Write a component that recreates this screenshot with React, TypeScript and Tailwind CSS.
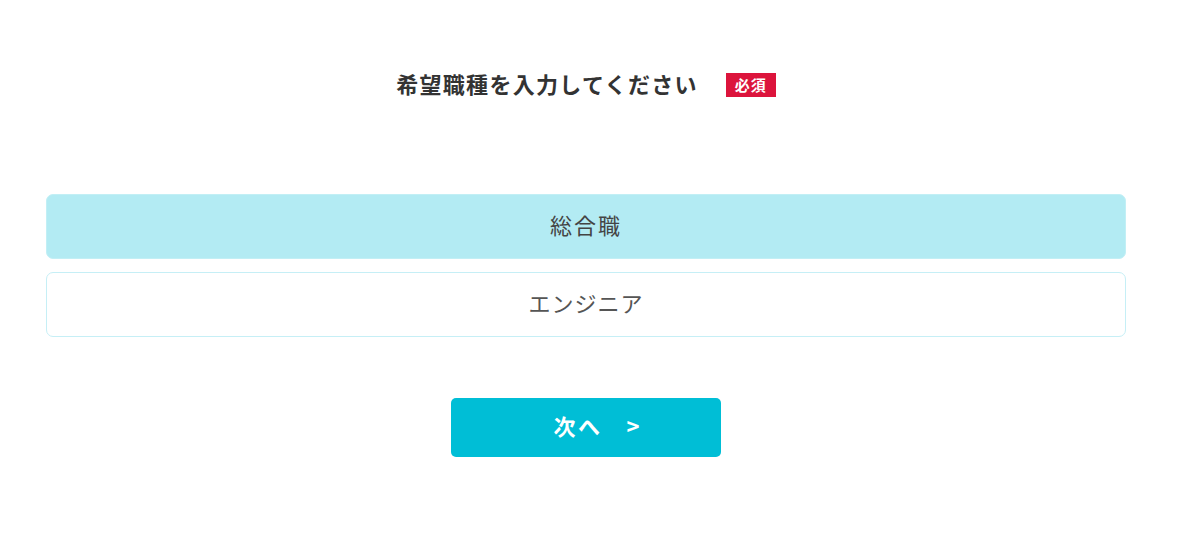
import React from "react";

export default function App() {
  const font = { fontFamily: '"Noto Sans CJK JP", "Noto Sans", sans-serif' };
  return (
    <div className="w-[1172px] min-h-[559px] bg-white px-[46px]" style={font}>
      <div className="flex items-center justify-center pt-[70px] h-[97px]">
        <h1 className="text-[22px] leading-[25px] font-bold text-[#333333] tracking-[1.3px]">
          希望職種を入力してください
        </h1>
        <span className="ml-[28px] mt-[2px] h-[24px] w-[50px] flex items-center justify-center bg-[#dc143c] text-white text-[15px] font-bold leading-none tracking-[1px]">
          必須
        </span>
      </div>
      <div className="mt-[97px] flex flex-col gap-[13px]">
        <button className="h-[65px] w-full rounded-[7px] bg-[#b3ebf3] border border-[#c2eff5] text-[22px] text-[#444444] tracking-[2px] pb-[4px]">
          総合職
        </button>
        <button className="h-[65px] w-full rounded-[7px] bg-white border border-[#c6eff6] text-[22px] text-[#555555] tracking-[1px] pb-[4px]">
          エンジニア
        </button>
      </div>
      <div className="mt-[61px] flex justify-center">
        <button className="h-[59px] w-[270px] rounded-[5px] bg-[#00bed6] text-white text-[22px] font-bold flex items-center justify-center pl-[21px] pb-[4px]">
          <span className="tracking-[2.5px]">次へ</span>
          <span className="ml-[24px]">&gt;</span>
        </button>
      </div>
    </div>
  );
}
